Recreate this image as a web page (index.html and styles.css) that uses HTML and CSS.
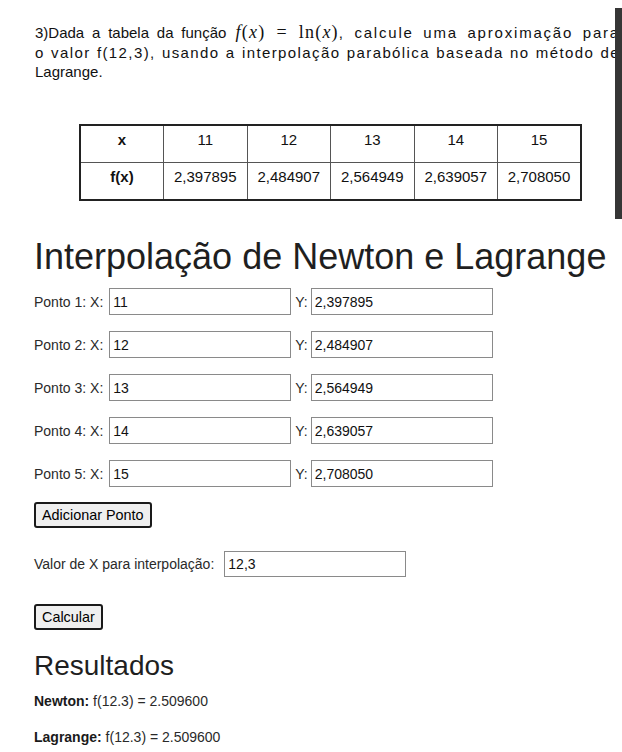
FILE: index.html
```
<!DOCTYPE html>
<html lang="pt">
<head>
<meta charset="utf-8">
<title>Interpolação de Newton e Lagrange</title>
<link rel="stylesheet" href="styles.css">
</head>
<body>
<div class="question">
  <div class="qtext">
    <div class="qline justify first"><span class="lead">3)Dada a tabela da função</span> <span class="math"><i>f</i>(<i>x</i>)<span class="eq">=</span>ln(<i>x</i>)</span><span class="tail">, calcule uma aproximação para</span></div>
    <div class="qline justify">o valor f(12,3), usando a interpolação parabólica baseada no método de</div>
    <div class="qline">Lagrange.</div>
  </div>
  <table class="qtable">
    <tr>
      <th>x</th><td>11</td><td>12</td><td>13</td><td>14</td><td>15</td>
    </tr>
    <tr>
      <th>f(x)</th><td>2,397895</td><td>2,484907</td><td>2,564949</td><td>2,639057</td><td>2,708050</td>
    </tr>
  </table>
  <div class="scrollbar"></div>
</div>

<div class="app">
  <h1 class="title">Interpolação de Newton e Lagrange</h1>
  <div class="points">
    <div class="point"><span class="lbl">Ponto 1: X:</span><input class="inp x" type="text" value="11"><span class="lbl ylbl">Y:</span><input class="inp y" type="text" value="2,397895"></div>
    <div class="point"><span class="lbl">Ponto 2: X:</span><input class="inp x" type="text" value="12"><span class="lbl ylbl">Y:</span><input class="inp y" type="text" value="2,484907"></div>
    <div class="point"><span class="lbl">Ponto 3: X:</span><input class="inp x" type="text" value="13"><span class="lbl ylbl">Y:</span><input class="inp y" type="text" value="2,564949"></div>
    <div class="point"><span class="lbl">Ponto 4: X:</span><input class="inp x" type="text" value="14"><span class="lbl ylbl">Y:</span><input class="inp y" type="text" value="2,639057"></div>
    <div class="point"><span class="lbl">Ponto 5: X:</span><input class="inp x" type="text" value="15"><span class="lbl ylbl">Y:</span><input class="inp y" type="text" value="2,708050"></div>
  </div>
  <button class="btn add" type="button">Adicionar Ponto</button>
  <div class="interp"><span class="lbl">Valor de X para interpolação:</span><input class="inp xi" type="text" value="12,3"></div>
  <button class="btn calc" type="button">Calcular</button>
  <h2 class="subtitle">Resultados</h2>
  <p class="result newton"><strong>Newton:</strong> f(12.3) = 2.509600</p>
  <p class="result lagrange"><strong>Lagrange:</strong> f(12.3) = 2.509600</p>
</div>
</body>
</html>
```
FILE: styles.css
```
html, body {
  margin: 0;
  padding: 0;
  background: #ffffff;
}

body {
  font-family: "Liberation Sans", Arial, sans-serif;
  overflow-x: hidden;
}

/* ---------- question picture ---------- */
.question {
  position: relative;
  height: 219px;
  padding-top: 23px;
  box-sizing: border-box;
  overflow: hidden;
}

.qtext {
  margin-left: 35px;
  width: 585px;
  font-size: 15px;
  line-height: 19.5px;
  color: #111111;
}

.qline {
  white-space: nowrap;
}

.justify {
  letter-spacing: 1.4px;
  text-align: justify;
  text-align-last: justify;
}

.first .lead {
  letter-spacing: 0;
}

.first .tail {
  letter-spacing: 1.8px;
}

.math {
  font-family: "Liberation Serif", "DejaVu Serif", serif;
  font-size: 18px;
  letter-spacing: 1.2px;
}

.math i {
  font-style: italic;
}

.eq {
  margin: 0 11px;
}

.qtable {
  margin: 42px 0 0 79px;
  width: 503px;
  border-collapse: collapse;
  table-layout: fixed;
  border: 2px solid #222222;
  font-size: 15px;
  color: #111111;
}

.qtable th,
.qtable td {
  border: 1px solid #555555;
  text-align: center;
  padding: 0 0 9px;
  height: 27px;
}

.qtable th {
  font-weight: bold;
}

.scrollbar {
  position: absolute;
  left: 615px;
  top: 8px;
  width: 7px;
  height: 211px;
  background: #363636;
}

/* ---------- app ---------- */
.app {
  padding-left: 34px;
  font-size: 14px;
  color: #2a2a2a;
}

.title {
  margin: 17px 0 0;
  font-size: 36px;
  font-weight: normal;
  line-height: normal;
  color: #1f1f1f;
}

.points {
  display: flex;
  flex-direction: column;
  gap: 16px;
  margin-top: 10px;
}

.point {
  display: flex;
  align-items: center;
  height: 27px;
}

.lbl {
  white-space: nowrap;
}

.inp {
  box-sizing: border-box;
  width: 182px;
  height: 27px;
  border: 1px solid #8a8a8a;
  padding: 0 3px;
  margin: 0;
  font-family: "Liberation Sans", Arial, sans-serif;
  font-size: 14px;
  color: #111111;
  background: #ffffff;
}

.inp.x {
  margin-left: 6px;
}

.ylbl {
  margin-left: 4px;
}

.inp.y {
  margin-left: 3px;
}

.btn {
  display: block;
  box-sizing: border-box;
  height: 26px;
  padding: 0 6px;
  font-family: "Liberation Sans", Arial, sans-serif;
  font-size: 14.4px;
  color: #000000;
  background: #efefef;
  border: 2px solid #1a1a1a;
  border-radius: 3px;
}

.add {
  margin-top: 15px;
}

.interp {
  display: flex;
  align-items: center;
  margin-top: 23px;
}

.inp.xi {
  margin-left: 10px;
  height: 26px;
}

.calc {
  margin-top: 27px;
}

.subtitle {
  margin: 20px 0 0;
  font-size: 28px;
  font-weight: normal;
  line-height: normal;
  color: #1f1f1f;
}

.result {
  margin: 0;
  line-height: normal;
}

.newton {
  margin-top: 11px;
}

.lagrange {
  margin-top: 20px;
}

.result strong {
  color: #1a1a1a;
}
```
